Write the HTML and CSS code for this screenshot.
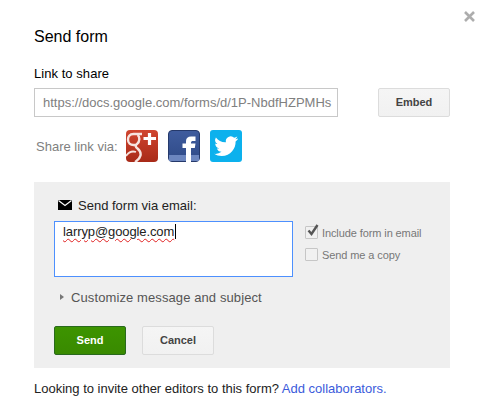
FILE: index.html
```html
<!DOCTYPE html>
<html lang="en">
<head>
    <meta charset="UTF-8">
    <meta name="viewport" content="width=device-width, initial-scale=1.0">
    <title>Send form</title>
    <link rel="stylesheet" href="styles.css">
</head>
<body>
    <div class="dialog">
        <svg class="close" width="11" height="11" viewBox="0 0 11 11"><path d="M1 1l9 9M10 1l-9 9" stroke="#adadad" stroke-width="2.6" fill="none"/></svg>

        <h1 class="title">Send form</h1>

        <div class="link-label">Link to share</div>
        <div class="link-row">
            <div class="link-input">https://docs.google.com/forms/d/1P-NbdfHZPMHs</div>
            <div class="btn btn-embed">Embed</div>
        </div>

        <div class="share-row">
            <span class="share-label">Share link via:</span>
            <svg class="share-icon" width="32" height="32" viewBox="0 0 32 32">
                <defs>
                    <linearGradient id="gplus" x1="0" y1="0" x2="0" y2="1">
                        <stop offset="0" stop-color="#d0452f"/>
                        <stop offset="1" stop-color="#a82a18"/>
                    </linearGradient>
                </defs>
                <rect width="32" height="32" rx="4" fill="url(#gplus)"/>
                <path d="M16 4H7.500C3.500 4 2 7 2 9.500 2 13 4.500 15 7.500 15H10" stroke="#f6e3df" stroke-width="2.400" fill="none"/>
                <path d="M11.500 5C14 6.500 14 12 11 14 9 15.500 9.500 17 11.500 18.500 14.500 21 15 23 14.500 25.500 13.800 29 12 30 9 32" stroke="#f6e3df" stroke-width="2.400" fill="none"/>
                <path d="M0 26C3 21.500 7 21 10 22" stroke="#f6e3df" stroke-width="1.800" fill="none"/>
                <path d="M23.500 3v12M17.500 8.500h12.500" stroke="#fff" stroke-width="3.200" fill="none"/>
            </svg>
            <svg class="share-icon" width="32" height="32" viewBox="0 0 32 32">
                <defs>
                    <linearGradient id="fb" x1="0" y1="0" x2="0" y2="1">
                        <stop offset="0" stop-color="#3f5c9e"/>
                        <stop offset="1" stop-color="#2f4a87"/>
                    </linearGradient>
                </defs>
                <rect x="0.500" y="0.500" width="31" height="31" rx="3.500" fill="url(#fb)" stroke="#25396b"/>
                <rect x="1" y="25" width="30" height="6" fill="#6c86bf"/>
                <path d="M18 32V18h-3.500v-4.500H18V11C18 8 20 6.500 23 6.500H27.500v4.500h-2.500c-1.300 0-2 .6-2 1.800v.7h4.500l-.7 4.500H23v14z" fill="#fff"/>
            </svg>
            <svg class="share-icon" width="32" height="32" viewBox="0 0 32 32">
                <rect width="32" height="32" rx="3" fill="#0cb1ed"/>
                <path d="M28 8.500c-.9.400-1.800.7-2.800.8 1-.6 1.800-1.600 2.100-2.700-.9.600-2 1-3.100 1.200a4.900 4.900 0 0 0-8.300 4.400C11.900 12.500 8.300 10.500 5.900 7.500a4.900 4.900 0 0 0 1.500 6.500c-.8 0-1.500-.2-2.200-.6 0 2.400 1.700 4.400 3.900 4.900-.7.200-1.500.2-2.200.1.600 2 2.400 3.300 4.600 3.400a9.800 9.800 0 0 1-7.300 2c2.200 1.400 4.800 2.200 7.500 2.200 9 0 14.200-7.600 13.900-14.500 1-.7 1.800-1.500 2.400-2.500z" fill="#fff"/>
            </svg>
        </div>

        <div class="panel">
            <div class="panel-head">
                <svg class="mail" width="14" height="10" viewBox="0 0 14 10"><rect width="14" height="10" fill="#000"/><path d="M0.500 0.500L7 5.500l6.500-5" stroke="#fff" stroke-width="1.200" fill="none"/></svg>
                <span>Send form via email:</span>
            </div>
            <div class="compose">
                <div class="recipients"><span class="typo">larryp@google.com</span></div>
                <div class="options">
                    <div class="option">
                        <span class="checkbox">
                            <svg class="tick" width="15" height="14" viewBox="0 0 15 14"><path d="M3.500 6.500l3 3.500 6-9" stroke="#555" stroke-width="2.400" fill="none"/></svg>
                        </span>
                        <span>Include form in email</span>
                    </div>
                    <div class="option">
                        <span class="checkbox"></span>
                        <span>Send me a copy</span>
                    </div>
                </div>
            </div>
            <div class="customize">
                <span class="arrow"></span>
                <span>Customize message and subject</span>
            </div>
            <div class="actions">
                <div class="btn btn-send">Send</div>
                <div class="btn">Cancel</div>
            </div>
        </div>

        <p class="footer">Looking to invite other editors to this form? <a href="#">Add collaborators.</a></p>
    </div>
</body>
</html>
```

FILE: styles.css
```css
* {
    margin: 0;
    padding: 0;
    box-sizing: border-box;
}

body {
    background: #fff;
    font-family: "Liberation Sans", Arial, sans-serif;
    font-size: 12px;
    color: #222;
}

.dialog {
    position: relative;
    width: 481px;
    height: 412px;
    padding: 28px 31px 0 34px;
    overflow: hidden;
}

.close {
    position: absolute;
    top: 11px;
    left: 464px;
}

.title {
    font-size: 16px;
    font-weight: normal;
    line-height: 18px;
    color: #000;
}

.link-label {
    margin-top: 20px;
    font-size: 13px;
    line-height: 16px;
    letter-spacing: 0.05px;
    color: #000;
}

.link-row {
    display: flex;
    justify-content: space-between;
    margin-top: 6px;
    width: 416px;
}

.link-input {
    width: 304px;
    height: 29px;
    padding: 0 8px;
    border: 1px solid #c8c8c8;
    background: #fff;
    font-size: 13px;
    line-height: 27px;
    color: #808080;
    white-space: nowrap;
}

.btn {
    width: 72px;
    height: 29px;
    border: 1px solid #dcdcdc;
    border-radius: 2px;
    background: linear-gradient(#f5f5f5, #f1f1f1);
    font-size: 11px;
    font-weight: bold;
    line-height: 27px;
    text-align: center;
    color: #444;
}

.share-row {
    display: flex;
    align-items: center;
    margin-top: 13px;
    padding-left: 2px;
    gap: 10px;
}

.share-label {
    width: 80px;
    font-size: 13px;
    color: #808080;
    white-space: nowrap;
}

.share-icon {
    display: block;
    flex: none;
}

.panel {
    width: 416px;
    height: 186px;
    margin-top: 20px;
    padding: 15px 20px 0;
    background: #efefef;
}

.panel-head {
    display: flex;
    align-items: center;
    gap: 6px;
    padding-left: 4px;
    height: 16px;
    font-size: 13px;
    color: #222;
}

.mail {
    display: block;
    flex: none;
}

.compose {
    display: flex;
    margin-top: 8px;
}

.recipients {
    width: 239px;
    height: 56px;
    padding: 2px 8px;
    border: 1px solid #4d90fe;
    background: #fff;
    font-size: 13px;
    line-height: 16px;
    letter-spacing: -0.1px;
    color: #222;
}

.typo {
    padding-right: 1px;
    border-right: 1px solid #000;
    text-decoration: underline wavy #e02020 1px;
    text-underline-offset: 2px;
}

.options {
    margin-left: 12px;
    padding-top: 5px;
}

.option {
    display: flex;
    align-items: center;
    gap: 4px;
    height: 13px;
    margin-bottom: 9px;
    font-size: 11px;
    letter-spacing: -0.1px;
    color: #777;
}

.checkbox {
    position: relative;
    display: block;
    width: 13px;
    height: 13px;
    border: 1px solid #c6c6c6;
    border-radius: 1px;
    background: #f1f1f1;
}

.tick {
    position: absolute;
    top: -3px;
    left: -1px;
}

.customize {
    display: flex;
    align-items: center;
    gap: 7px;
    margin-top: 12px;
    padding-left: 6px;
    height: 16px;
    font-size: 13px;
    letter-spacing: 0.1px;
    color: #555;
}

.arrow {
    width: 0;
    height: 0;
    border-left: 4px solid #777;
    border-top: 3.500px solid transparent;
    border-bottom: 3.500px solid transparent;
}

.actions {
    display: flex;
    gap: 16px;
    margin-top: 21px;
}

.btn-send {
    border-color: #29691d;
    background: linear-gradient(#3d9400, #398a00);
    color: #fff;
}

.footer {
    margin-top: 13px;
    font-size: 13px;
    line-height: 16px;
    color: #222;
}

.footer a {
    color: #3b5bdb;
    text-decoration: none;
}
```
